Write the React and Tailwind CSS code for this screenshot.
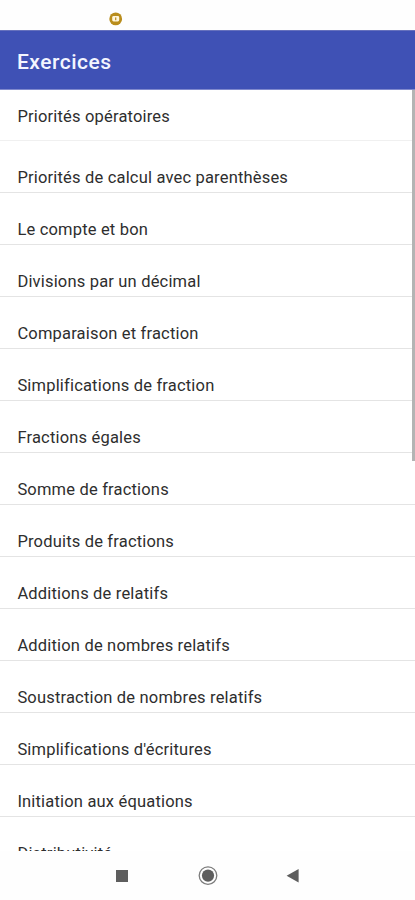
const exercices = [
  'Priorités de calcul avec parenthèses',
  'Le compte et bon',
  'Divisions par un décimal',
  'Comparaison et fraction',
  'Simplifications de fraction',
  'Fractions égales',
  'Somme de fractions',
  'Produits de fractions',
  'Additions de relatifs',
  'Addition de nombres relatifs',
  'Soustraction de nombres relatifs',
  "Simplifications d'écritures",
  'Initiation aux équations',
  'Distributivité',
];

const StatusBar = () => (
  <div className="h-[30px] shrink-0 bg-[#fefefe] pl-[109px] pt-[12px]">
    <svg width="14" height="14" viewBox="0 0 14 14">
      <circle cx="6.7" cy="6.9" r="6.4" fill="#b98d1c" />
      <rect x="3.2" y="4.1" width="7" height="5.4" rx="1.4" fill="#fff6dc" />
      <rect x="6.1" y="5.4" width="1.2" height="2.8" fill="#b98d1c" />
    </svg>
  </div>
);

const NavBar = () => (
  <nav className="flex h-[49px] shrink-0 items-center bg-[#fefefe]">
    <svg className="ml-[116px]" width="12" height="12" viewBox="0 0 12 12">
      <rect width="12" height="12" fill="#5e5e5e" />
    </svg>
    <svg className="ml-[70px]" width="20" height="20" viewBox="0 0 20 20">
      <circle cx="10" cy="9.6" r="8.8" fill="none" stroke="#7c7c7c" strokeWidth="1.3" />
      <circle cx="10" cy="9.6" r="6.1" fill="#5e5e5e" />
    </svg>
    <svg className="ml-[68px]" width="13" height="14" viewBox="0 0 13 14">
      <path d="M12.6 0V13.6L0.6 6.8Z" fill="#5e5e5e" />
    </svg>
  </nav>
);

const App = () => {
  return (
    <div className="flex h-[900px] w-[415px] flex-col overflow-hidden bg-white font-[Roboto,sans-serif]">
      <StatusBar />
      <header className="flex h-[60px] shrink-0 items-center border-y border-t-[#6671bd] border-b-[#8089cd] bg-[#3f51b5] pl-[17px] pt-[4px]">
        <h1 className="text-[21px] font-medium leading-6 tracking-[0.5px] text-[#f3f5ff]">Exercices</h1>
      </header>

      <main className="relative min-h-0 flex-1 overflow-hidden text-[16.5px] leading-6 tracking-[0.18px] text-[#2e2e2e]">
        <ul>
          <li className="flex h-[51.4px] items-center border-b border-[#f0f0f0] pl-[17.4px] pt-[4px]">Priorités opératoires</li>
          {exercices.map((titre) => (
            <li key={titre} className="flex h-[51.96px] items-end border-b border-[#e4e4e4] pb-[2px] pl-[17.4px]">
              {titre}
            </li>
          ))}
        </ul>
        <div className="absolute right-0 top-0 h-[371px] w-[3px] bg-[#b4b4b4]" />
      </main>

      <NavBar />
    </div>
  );
};

export default App;
